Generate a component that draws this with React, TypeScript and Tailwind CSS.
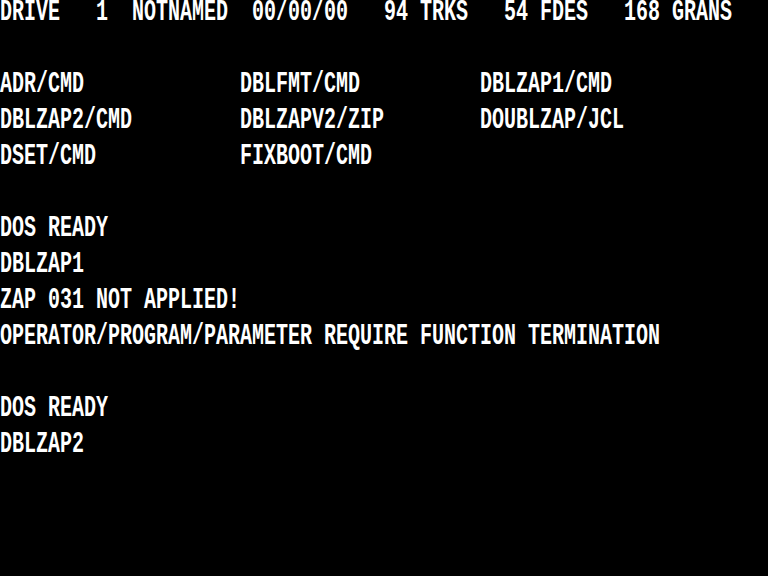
import React from "react";

const lines = [
  "DRIVE   1  NOTNAMED  00/00/00   94 TRKS   54 FDES   168 GRANS",
  "",
  "ADR/CMD             DBLFMT/CMD          DBLZAP1/CMD",
  "DBLZAP2/CMD         DBLZAPV2/ZIP        DOUBLZAP/JCL",
  "DSET/CMD            FIXBOOT/CMD",
  "",
  "DOS READY",
  "DBLZAP1",
  "ZAP 031 NOT APPLIED!",
  "OPERATOR/PROGRAM/PARAMETER REQUIRE FUNCTION TERMINATION",
  "",
  "DOS READY",
  "DBLZAP2",
  "",
  "",
  "",
];

export default function App() {
  return (
    <main className="w-[768px] h-[576px] bg-black overflow-hidden text-white font-['Liberation_Mono',monospace]">
      {lines.map((line, i) => (
        <div key={i} className="h-[36px] overflow-visible">
          <div className="whitespace-pre text-[20px] leading-[20px] font-bold origin-top scale-y-150 -translate-y-[3px]">
            {line}
          </div>
        </div>
      ))}
    </main>
  );
}
